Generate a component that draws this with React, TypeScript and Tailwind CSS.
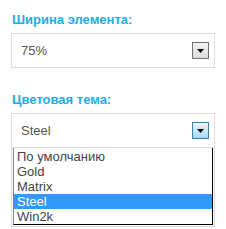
function Arrow({ active }: { active?: boolean }) {
  return (
    <span
      className={
        active
          ? "flex h-[17px] w-[17px] items-center justify-center border border-[#3c7fb1] bg-gradient-to-b from-[#eaf6fd] to-[#a7d9f5]"
          : "flex h-[17px] w-[17px] items-center justify-center border border-[#707070] bg-gradient-to-b from-[#f2f2f2] to-[#dcdcdc]"
      }
    >
      <svg width="7" height="4" viewBox="0 0 7 4">
        <path d="M0 0h7L3.5 4z" fill="#000" />
      </svg>
    </span>
  )
}

const themes = ["По умолчанию", "Gold", "Matrix", "Steel", "Win2k"]

export default function App() {
  return (
    <div className="h-[229px] w-[226px] bg-white font-['Liberation_Sans',Arial,sans-serif]">
      <div className="pl-[11px] pt-[12px]">
        <div className="pl-px text-[13px] font-bold leading-[16px] text-[#20aee8]">
          Ширина элемента:
        </div>
        <div className="mt-[5px] flex h-[35px] w-[204px] items-center justify-between border border-[#dddddd] pl-[9px] pr-[5px]">
          <span className="text-[13px] text-[#555]">75%</span>
          <Arrow />
        </div>

        <div className="mt-[24px] pl-px text-[13px] font-bold leading-[16px] text-[#20aee8]">
          Цветовая тема:
        </div>
        <div className="relative mt-[5px] w-[204px]">
          <div className="flex h-[35px] items-center justify-between border border-[#dddddd] pl-[9px] pr-[5px]">
            <span className="text-[13px] text-[#555]">Steel</span>
            <Arrow active />
          </div>
          <div className="border-x border-b border-[#dddddd] pb-[1px]">
            <ul className="ml-px mr-px border border-t-0 border-l-[#808080] border-r-black border-b-black bg-white pt-px text-[13px] leading-[15px] text-[#444]">
              {themes.map((t) => (
                <li
                  key={t}
                  className={
                    t === "Steel"
                      ? "bg-[#3399ff] pl-[3px] text-white"
                      : "pl-[3px]"
                  }
                >
                  {t}
                </li>
              ))}
            </ul>
          </div>
        </div>
      </div>
    </div>
  )
}
